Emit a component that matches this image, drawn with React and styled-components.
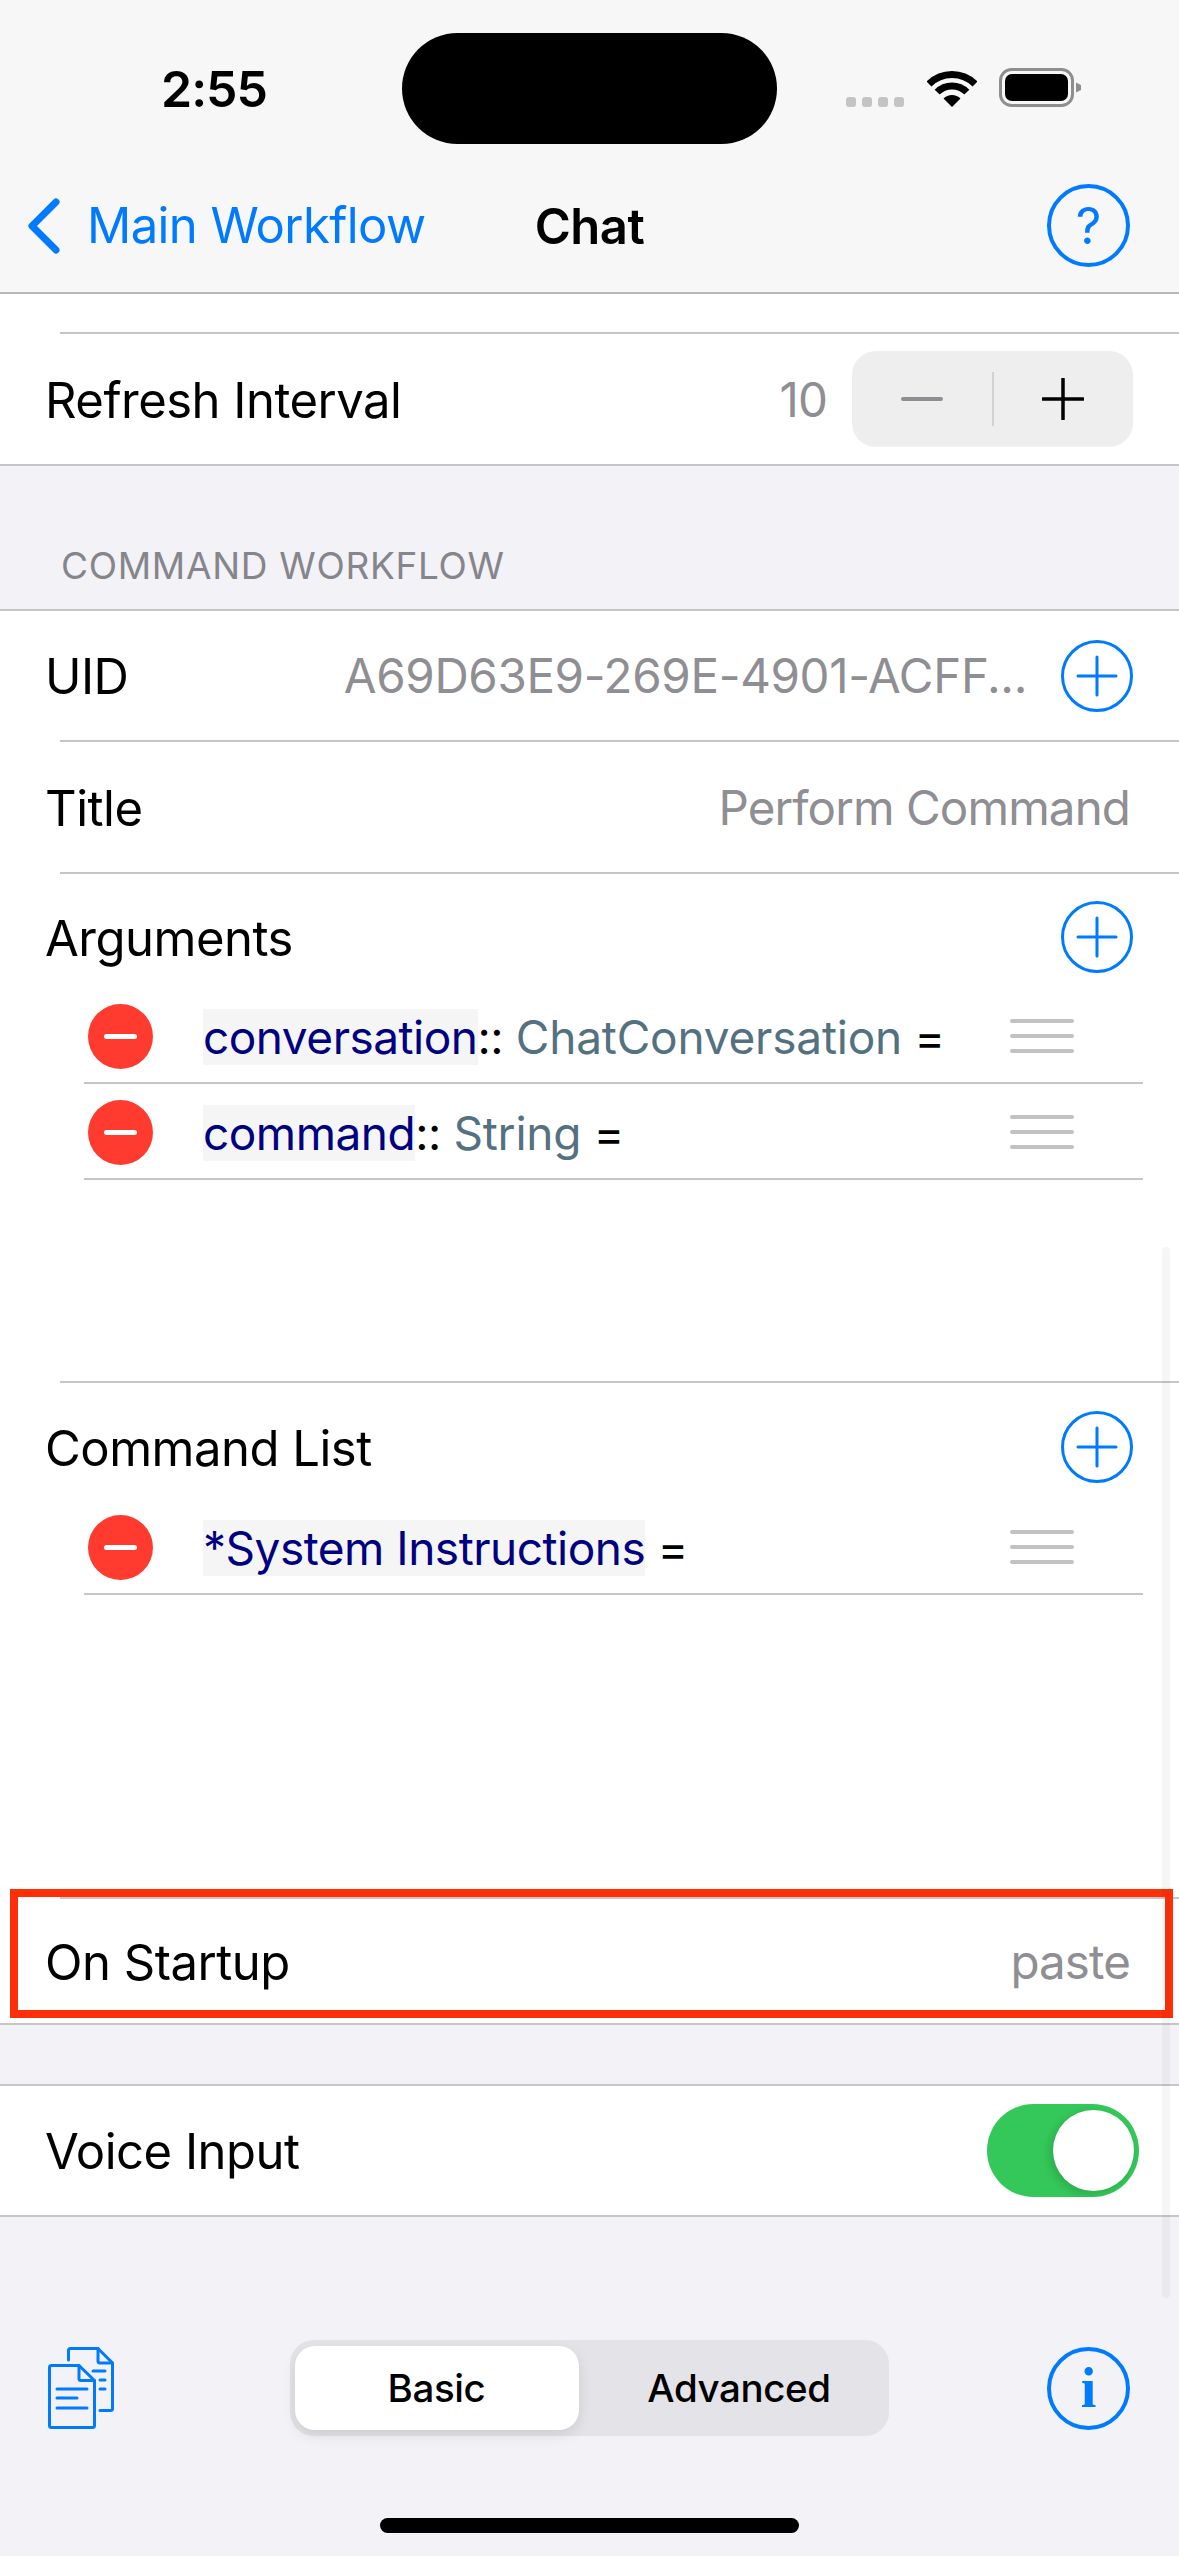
import React from "react";
import styled, { createGlobalStyle } from "styled-components";

const BLUE = "#007aff";
const LINE = "#c6c6c8";

const GlobalStyle = createGlobalStyle`
  html, body {
    margin: 0;
    padding: 0;
    background: #f2f2f7;
  }
  * {
    box-sizing: border-box;
  }
`;

const Phone = styled.div`
  position: relative;
  width: 1179px;
  height: 2556px;
  overflow: hidden;
  background: #f2f2f7;
  font-family: Inter, "Liberation Sans", sans-serif;
  color: #000;
`;

const Header = styled.header`
  height: 294px;
  background: #f7f7f7;
  border-bottom: 2px solid #b8b8b8;
`;

const StatusBar = styled.div`
  display: flex;
  align-items: flex-start;
  height: 144px;
  padding: 33px 0 0 161px;
`;

const Time = styled.div`
  width: 241px;
  margin-top: 31px;
  font-size: 50px;
  line-height: 50px;
  font-weight: 600;
  letter-spacing: -1px;
`;

const Island = styled.div`
  width: 375px;
  height: 111px;
  border-radius: 56px;
  background: #000;
`;

const StatusIcons = styled.div`
  display: flex;
  align-items: flex-end;
  height: 39px;
  margin: 35px 0 0 69px;
`;

const Dots = styled.div`
  display: flex;
  gap: 6px;
  margin-right: 23px;
`;

const Dot = styled.span`
  width: 10px;
  height: 10px;
  border-radius: 3px;
  background: #c4c4c4;
`;

const NavBar = styled.nav`
  display: grid;
  grid-template-columns: 1fr auto 1fr;
  align-items: center;
  height: 83px;
  margin-top: 40px;
  padding: 0 28px;
`;

const BackLink = styled.div`
  display: flex;
  align-items: center;
  gap: 27px;
  color: ${BLUE};
  font-size: 49px;
  letter-spacing: -0.6px;
`;

const NavTitle = styled.div`
  padding-top: 2px;
  font-size: 49px;
  font-weight: 600;
  letter-spacing: -0.5px;
`;

const RoundGlyph = styled.div`
  justify-self: end;
  display: flex;
  align-items: center;
  justify-content: center;
  width: 83px;
  height: 83px;
  margin-right: ${(p) => p.$inset || 0}px;
  border: 4px solid ${BLUE};
  border-radius: 50%;
  color: ${BLUE};
  font-family: ${(p) => (p.$serif ? '"Liberation Serif", serif' : "Inter, sans-serif")};
  font-size: ${(p) => (p.$serif ? "56px" : "50px")};
  font-weight: ${(p) => (p.$serif ? 700 : 400)};
`;

const Strip = styled.div`
  height: 38px;
  background: #fff;
`;

const Card = styled.section`
  background: #fff;
  border-bottom: 2px solid ${LINE};
  border-top: ${(p) => (p.$top ? `2px solid ${LINE}` : "none")};
`;

const Divider = styled.div`
  height: 2px;
  margin-left: 60px;
  background: ${LINE};
`;

const Row = styled.div`
  position: relative;
  display: flex;
  align-items: center;
  justify-content: space-between;
  height: ${(p) => p.$height}px;
  padding: 0 ${(p) => p.$right || 49}px 0 45px;
`;

const Label = styled.div`
  padding-top: 2px;
  font-size: 49px;
  letter-spacing: -0.5px;
`;

const Value = styled.div`
  color: #8e8e93;
  font-size: 47.5px;
  letter-spacing: ${(p) => p.$spacing ?? -0.9}px;
`;

const RowEnd = styled.div`
  display: flex;
  align-items: center;
  gap: ${(p) => p.$gap}px;
`;

const Stepper = styled.div`
  display: grid;
  grid-template-columns: 1fr 2px 1fr;
  align-items: center;
  width: 281px;
  height: 96px;
  border-radius: 24px;
  background: #eeeeef;
`;

const StepperLine = styled.span`
  height: 54px;
  background: #d2d2d4;
`;

const StepperIcon = styled.svg`
  justify-self: center;
`;

const SectionTitle = styled.div`
  height: 143px;
  padding: 80px 0 0 61px;
  color: #85858b;
  font-size: 37px;
  line-height: 40px;
  letter-spacing: 0.7px;
`;

const ListBlock = styled.div`
  height: ${(p) => p.$height}px;
`;

const ListHead = styled.div`
  display: flex;
  align-items: flex-start;
  justify-content: space-between;
  height: ${(p) => p.$height}px;
  padding: ${(p) => p.$top}px 46px 0 45px;
  line-height: 71px;
`;

const ListItem = styled.div`
  display: flex;
  align-items: center;
  height: 96px;
  margin: 0 36px 0 84px;
  padding: 2px 69px 0 4px;
  border-bottom: 2px solid ${LINE};
`;

const RemoveButton = styled.div`
  display: flex;
  flex: none;
  align-items: center;
  justify-content: center;
  width: 65px;
  height: 65px;
  margin-right: 50px;
  border-radius: 50%;
  background: #ff3b30;

  &::after {
    content: "";
    width: 33px;
    height: 5px;
    border-radius: 3px;
    background: #fff;
  }
`;

const Code = styled.div`
  flex: 1;
  margin-top: 2px;
  font-size: 46px;
  line-height: 56px;
  letter-spacing: -0.5px;
`;

const ParamName = styled.span`
  display: inline-block;
  color: #000080;
  background: #f5f5f5;
`;

const TypeName = styled.span`
  color: #54717f;
  letter-spacing: -0.2px;
`;

const Handle = styled.div`
  display: flex;
  flex-direction: column;
  gap: 11px;
  width: 64px;

  span {
    height: 4px;
    border-radius: 2px;
    background: #c2c2c2;
  }
`;

const Highlight = styled.div`
  position: absolute;
  top: -10px;
  left: 10px;
  right: 6px;
  bottom: 5px;
  border: 8px solid #ff3008;
  pointer-events: none;
`;

const Gap = styled.div`
  height: ${(p) => p.$height}px;
`;

const Switch = styled.div`
  display: flex;
  align-items: center;
  justify-content: flex-end;
  width: 152px;
  height: 93px;
  padding-right: 5px;
  border-radius: 47px;
  background: #34c759;

  &::after {
    content: "";
    width: 81px;
    height: 81px;
    border-radius: 50%;
    background: #fff;
    box-shadow: -3px 3px 8px rgba(0, 0, 0, 0.15);
  }
`;

const Toolbar = styled.div`
  display: grid;
  grid-template-columns: 1fr auto 1fr;
  align-items: center;
  height: 96px;
  margin-top: 123px;
  padding: 0 49px 0 48px;
`;

const Segments = styled.div`
  display: grid;
  grid-template-columns: 284px 1fr;
  align-items: center;
  width: 599px;
  height: 96px;
  padding: 6px 5px;
  border-radius: 24px;
  background: #e3e3e8;
`;

const Segment = styled.div`
  display: flex;
  align-items: center;
  justify-content: center;
  height: 84px;
  padding-left: ${(p) => (p.$active ? 0 : 16)}px;
  border-radius: 20px;
  font-size: 38.5px;
  font-weight: 500;
  letter-spacing: -0.4px;
  background: ${(p) => (p.$active ? "#fff" : "transparent")};
  box-shadow: ${(p) => (p.$active ? "0 5px 14px rgba(0, 0, 0, 0.1)" : "none")};
`;

const HomeBar = styled.div`
  width: 419px;
  height: 15px;
  margin: 82px auto 0;
  border-radius: 8px;
  background: #000;
`;

const ScrollThumb = styled.div`
  position: absolute;
  top: 1247px;
  right: 9px;
  width: 8px;
  height: 1051px;
  border-radius: 4px;
  background: rgba(0, 0, 0, 0.035);
`;

const PlusButton = () => (
  <svg width="72" height="72" viewBox="0 0 72 72" fill="none" stroke={BLUE}>
    <circle cx="36" cy="36" r="34.5" strokeWidth="3" />
    <path d="M36 17V55M17 36H55" strokeWidth="3" strokeLinecap="round" />
  </svg>
);

const Wifi = () => (
  <svg width="50" height="37" viewBox="0 0 50 37" fill="none" stroke="#000" strokeWidth="7">
    <path d="M2 14A32.5 32.5 0 0 1 48 14" />
    <path d="M10.15 22.15A21 21 0 0 1 39.85 22.15" />
    <path d="M25 37L16.5 28.5A12 12 0 0 1 33.5 28.5Z" fill="#000" stroke="none" />
  </svg>
);

const Battery = () => (
  <svg width="82" height="39" viewBox="0 0 82 39" style={{ marginLeft: 22 }}>
    <rect x="1.5" y="1.5" width="72" height="36" rx="11" fill="none" stroke="#8e8e8e" strokeWidth="3" />
    <rect x="6" y="6" width="63" height="27" rx="7" fill="#000" />
    <path d="M77 14.5L82 17V22L77 24.5Z" fill="#8e8e8e" />
  </svg>
);

const DocsIcon = () => (
  <svg width="66" height="82" viewBox="0 0 66 82" fill="none" stroke={BLUE} strokeWidth="3" strokeLinecap="round" strokeLinejoin="round">
    <path d="M20.5 13V3.5Q20.5 1.5 22.5 1.5H50L64.5 16V61.5Q64.5 63.5 62.5 63.5H52" />
    <path d="M50 1.5V14Q50 16 52 16H64.5" />
    <path d="M45 24H57M52 33H57M52 42H57" />
    <path d="M3.5 18.5H31L46.5 33.5V78.5Q46.5 80.5 44.5 80.5H3.5Q1.5 80.5 1.5 78.5V20.5Q1.5 18.5 3.5 18.5Z" />
    <path d="M31 18.5V31.5Q31 33.5 33 33.5H46.5" />
    <path d="M9 42H39M9 51H29M9 61H39" />
  </svg>
);

const Args = ({ name, sep = "::", type }) => (
  <ListItem>
    <RemoveButton />
    <Code>
      <ParamName>{name}</ParamName>
      {sep}
      {type && <TypeName> {type}</TypeName>} =
    </Code>
    <Handle>
      <span />
      <span />
      <span />
    </Handle>
  </ListItem>
);

export default function App() {
  return (
    <Phone>
      <GlobalStyle />
      <Header>
        <StatusBar>
          <Time>2:55</Time>
          <Island />
          <StatusIcons>
            <Dots>
              <Dot />
              <Dot />
              <Dot />
              <Dot />
            </Dots>
            <Wifi />
            <Battery />
          </StatusIcons>
        </StatusBar>
        <NavBar>
          <BackLink>
            <svg width="32" height="56" viewBox="0 0 32 56" fill="none" stroke={BLUE} strokeWidth="7" strokeLinecap="round" strokeLinejoin="round">
              <path d="M28 4L4 28L28 52" />
            </svg>
            Main Workflow
          </BackLink>
          <NavTitle>Chat</NavTitle>
          <RoundGlyph $inset={21}>?</RoundGlyph>
        </NavBar>
      </Header>

      <Strip />
      <Card>
        <Divider />
        <Row $height={130} $right={46}>
          <Label>Refresh Interval</Label>
          <RowEnd $gap={25}>
            <Value>10</Value>
            <Stepper>
              <StepperIcon width="42" height="4" viewBox="0 0 42 4">
                <rect width="42" height="4" rx="2" fill="#8e8e93" />
              </StepperIcon>
              <StepperLine />
              <StepperIcon width="42" height="42" viewBox="0 0 42 42">
                <path d="M21 1V41M1 21H41" stroke="#000" strokeWidth="3.5" strokeLinecap="round" />
              </StepperIcon>
            </Stepper>
          </RowEnd>
        </Row>
      </Card>

      <SectionTitle>COMMAND WORKFLOW</SectionTitle>
      <Card $top>
        <Row $height={129} $right={46}>
          <Label>UID</Label>
          <RowEnd $gap={34}>
            <Value $spacing={-0.35}>A69D63E9-269E-4901-ACFF...</Value>
            <PlusButton />
          </RowEnd>
        </Row>
        <Divider />
        <Row $height={130}>
          <Label>Title</Label>
          <Value>Perform Command</Value>
        </Row>
        <Divider />
        <ListBlock $height={507}>
          <ListHead $top={27} $height={114}>
            <Label>Arguments</Label>
            <PlusButton />
          </ListHead>
          <Args name="conversation" type="ChatConversation" />
          <Args name="command" type="String" />
        </ListBlock>
        <Divider />
        <ListBlock $height={514}>
          <ListHead $top={28} $height={116}>
            <Label>Command List</Label>
            <PlusButton />
          </ListHead>
          <Args name="*System Instructions" sep="" />
        </ListBlock>
        <Divider />
        <Row $height={124}>
          <Label>On Startup</Label>
          <Value>paste</Value>
          <Highlight />
        </Row>
      </Card>

      <Gap $height={59} />
      <Card $top>
        <Row $height={129} $right={40}>
          <Label>Voice Input</Label>
          <Switch />
        </Row>
      </Card>

      <Toolbar>
        <DocsIcon />
        <Segments>
          <Segment $active>Basic</Segment>
          <Segment>Advanced</Segment>
        </Segments>
        <RoundGlyph $serif>i</RoundGlyph>
      </Toolbar>
      <HomeBar />
      <ScrollThumb />
    </Phone>
  );
}
